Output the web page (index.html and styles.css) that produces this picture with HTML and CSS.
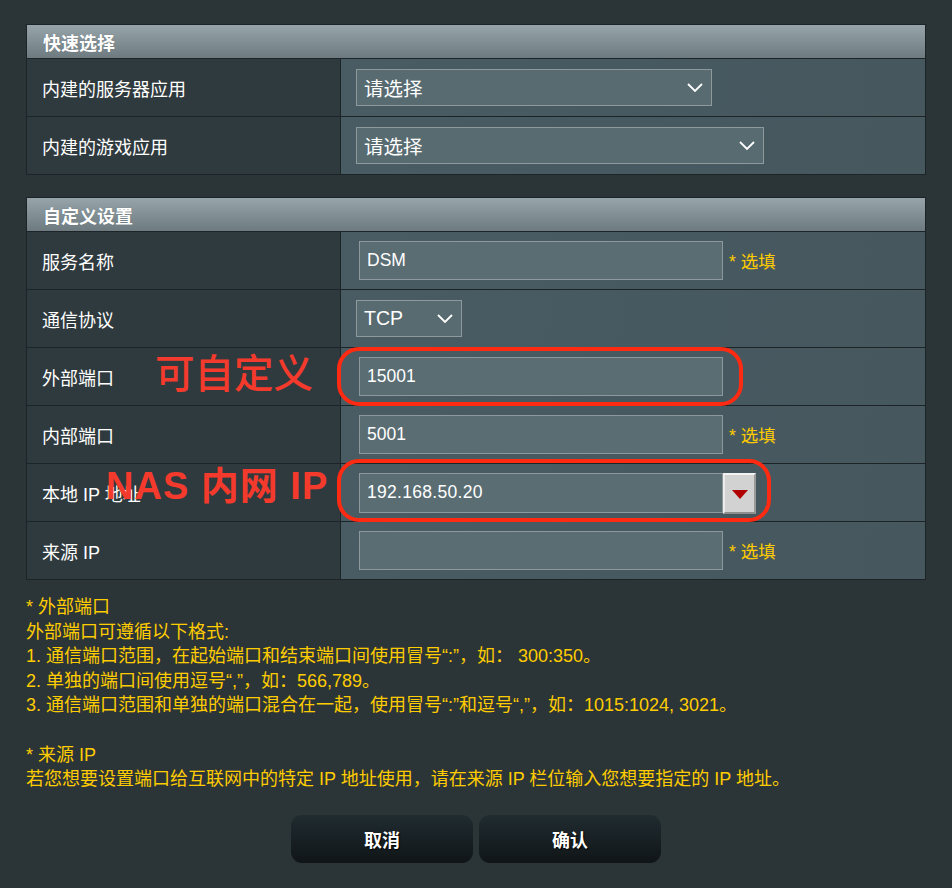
FILE: index.html
```html
<!DOCTYPE html>
<html lang="zh-CN">
<head>
<meta charset="utf-8">
<title>端口转发</title>
<link rel="stylesheet" href="styles.css">
</head>
<body>
<div class="page">
  <section class="panel">
    <div class="panel-head">快速选择</div>
    <div class="row">
      <div class="label">内建的服务器应用</div>
      <div class="field">
        <div class="select sel-server"><span>请选择</span><svg class="chev" viewBox="0 0 16 10" width="16" height="10"><polyline points="1,1 8,8 15,1"/></svg></div>
      </div>
    </div>
    <div class="row">
      <div class="label">内建的游戏应用</div>
      <div class="field">
        <div class="select sel-game"><span>请选择</span><svg class="chev" viewBox="0 0 16 10" width="16" height="10"><polyline points="1,1 8,8 15,1"/></svg></div>
      </div>
    </div>
  </section>

  <section class="panel panel-custom">
    <div class="panel-head">自定义设置</div>
    <div class="row">
      <div class="label">服务名称</div>
      <div class="field">
        <input class="text" type="text" value="DSM">
        <span class="optional">* 选填</span>
      </div>
    </div>
    <div class="row">
      <div class="label">通信协议</div>
      <div class="field">
        <div class="select sel-proto"><span>TCP</span><svg class="chev" viewBox="0 0 16 10" width="16" height="10"><polyline points="1,1 8,8 15,1"/></svg></div>
      </div>
    </div>
    <div class="row">
      <div class="label">外部端口</div>
      <div class="field">
        <input class="text" type="text" value="15001">
      </div>
    </div>
    <div class="row">
      <div class="label">内部端口</div>
      <div class="field">
        <input class="text" type="text" value="5001">
        <span class="optional">* 选填</span>
      </div>
    </div>
    <div class="row">
      <div class="label">本地 IP 地址</div>
      <div class="field">
        <input class="text text-ip" type="text" value="192.168.50.20">
        <div class="drop-btn"><span class="tri"></span></div>
      </div>
    </div>
    <div class="row">
      <div class="label">来源 IP</div>
      <div class="field">
        <input class="text" type="text" value="">
        <span class="optional">* 选填</span>
      </div>
    </div>
  </section>

  <div class="hint">
    <p>* 外部端口</p>
    <p>外部端口可遵循以下格式:</p>
    <p>1. 通信端口范围，在起始端口和结束端口间使用冒号“:”，如： 300:350。</p>
    <p>2. 单独的端口间使用逗号“,”，如：566,789。</p>
    <p>3. 通信端口范围和单独的端口混合在一起，使用冒号“:”和逗号“,”，如：1015:1024, 3021。</p>
    <p class="blank">&nbsp;</p>
    <p>* 来源 IP</p>
    <p>若您想要设置端口给互联网中的特定 IP 地址使用，请在来源 IP 栏位输入您想要指定的 IP 地址。</p>
  </div>

  <div class="actions">
    <button class="btn" type="button">取消</button>
    <button class="btn" type="button">确认</button>
  </div>

  <div class="mark mark-ext"></div>
  <div class="mark mark-ip"></div>
  <div class="note note-ext">可自定义</div>
  <div class="note note-ip">NAS 内网 IP</div>
</div>
</body>
</html>
```

FILE: styles.css
```css
* { box-sizing: border-box; }

html, body {
  margin: 0;
  padding: 0;
  background: #2b3538;
}

body {
  font-family: "Liberation Sans", "Noto Sans CJK SC", sans-serif;
  font-size: 18px;
  color: #ffffff;
}

.page {
  position: relative;
  width: 952px;
  height: 888px;
  padding: 24px 26px 0 26px;
}

.panel {
  border: 1px solid #1c2427;
  background: #2f3a3e;
}

.panel-custom {
  margin-top: 22px;
}

.panel-head {
  height: 34px;
  padding-left: 16px;
  display: flex;
  align-items: center;
  font-weight: bold;
  font-size: 18px;
  color: #ffffff;
  background: linear-gradient(#97a5ab, #6d7b81);
  border-bottom: 1px solid #1c2427;
  text-shadow: 0 0 1px rgba(0,0,0,0.25);
}

.row {
  display: grid;
  grid-template-columns: 314px 1fr;
  height: 58px;
  border-bottom: 1px solid #1c2427;
}

.row:last-child {
  border-bottom: none;
  height: 57px;
}

.label {
  display: flex;
  align-items: center;
  padding-left: 15px;
  background: #2f3a3e;
  border-right: 1px solid #1c2427;
  font-size: 18px;
  color: #ffffff;
}

.field {
  display: flex;
  align-items: center;
  padding-left: 15px;
  background: linear-gradient(100deg, #495c63 0%, #46575e 100%);
}

.select {
  height: 37px;
  display: flex;
  align-items: center;
  justify-content: space-between;
  padding: 0 8px 0 7px;
  background: #586b71;
  border: 1px solid #8e999c;
  font-size: 19.5px;
  color: #ffffff;
}

.sel-server { width: 356px; }
.sel-game { width: 408px; }
.sel-proto { width: 106px; }

.chev {
  display: block;
  fill: none;
  stroke: #ffffff;
  stroke-width: 1.8;
}

.text {
  margin-left: 3px;
  width: 364px;
  height: 39px;
  padding: 0 0 0 7px;
  background: #5a6d73;
  border: 1px solid #8c989b;
  font-family: "Liberation Sans", "Noto Sans CJK SC", sans-serif;
  font-size: 17.5px;
  color: #ffffff;
  outline: none;
}

.text-ip {
  height: 40px;
  letter-spacing: 0.3px;
}

.optional {
  margin-left: 6px;
  color: #ffcc00;
  font-size: 17.5px;
}

.drop-btn {
  width: 33px;
  height: 41px;
  margin-top: 1px;
  display: flex;
  align-items: center;
  justify-content: center;
  background: #d2d2d2;
  border-top: 2px solid #f2f2f2;
  border-left: 2px solid #ececec;
  border-bottom: 2px solid #8e8e8e;
  border-right: 2px solid #9a9a9a;
}

.tri {
  width: 0;
  height: 0;
  border-left: 8px solid transparent;
  border-right: 8px solid transparent;
  border-top: 9px solid #b00000;
  margin-top: 2px;
}

.hint {
  margin-top: 15px;
  color: #ffcc00;
  font-size: 18px;
  line-height: 24.6px;
}

.hint p {
  margin: 0;
}

.actions {
  margin-top: 23px;
  display: flex;
  justify-content: center;
  gap: 6px;
}

.btn {
  width: 182px;
  height: 48px;
  border: none;
  border-radius: 11px;
  background: linear-gradient(#202c31, #101517);
  color: #ffffff;
  font-family: "Liberation Sans", "Noto Sans CJK SC", sans-serif;
  font-weight: bold;
  font-size: 18px;
  text-shadow: 1px 1px 1px #000000;
}

.mark {
  position: absolute;
  border: 4px solid #ff2a12;
  border-radius: 22px;
}

.mark-ext {
  left: 337px;
  top: 347px;
  width: 406px;
  height: 59px;
}

.mark-ip {
  left: 337px;
  top: 459px;
  width: 434px;
  height: 63px;
}

.note {
  position: absolute;
  color: #f43a2c;
  line-height: 1;
  white-space: nowrap;
}

.note-ext {
  left: 155px;
  top: 355px;
  font-size: 39.5px;
  font-weight: 500;
}

.note-ip {
  left: 106px;
  top: 467px;
  font-size: 38px;
  font-weight: bold;
  letter-spacing: 1px;
}
```
